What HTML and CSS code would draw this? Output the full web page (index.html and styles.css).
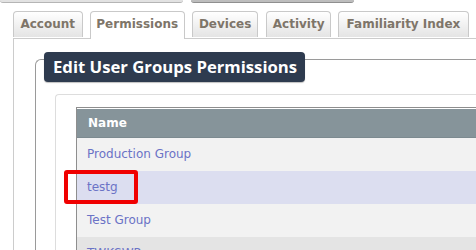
FILE: index.html
```html
<!DOCTYPE html>
<html>
<head>
<meta charset="utf-8">
<link rel="stylesheet" href="styles.css">
</head>
<body>
<div class="topbar"><div class="tb tb1"></div><div class="tb tb2"></div></div>
<div class="tabs">
  <div class="tab w-account">Account</div>
  <div class="tab active w-perm">Permissions</div>
  <div class="tab w-dev">Devices</div>
  <div class="tab w-act">Activity</div>
  <div class="tab w-fam">Familiarity Index</div>
</div>
<div class="panel">
  <div class="group">
    <div class="legend">Edit User Groups Permissions</div>
    <div class="inner">
      <div class="table">
        <div class="th">Name</div>
        <div class="tr r1"><a>Production Group</a></div>
        <div class="tr r2"><a>testg</a></div>
        <div class="tr r1"><a>Test Group</a></div>
        <div class="tr r3"><a>TWKSWP</a></div>
      </div>
    </div>
  </div>
</div>
<div class="highlight"></div>
</body>
</html>
```
FILE: styles.css
```css
html, body {
  margin: 0;
  padding: 0;
  background: #fff;
  width: 476px;
  height: 250px;
  overflow: hidden;
  position: relative;
}
body {
  font-family: "DejaVu Sans", Verdana, sans-serif;
}
.topbar {
  display: flex;
  height: 3px;
  gap: 8px;
}
.tb {
  height: 2px;
  border-radius: 0 0 4px 4px;
}
.tb1 {
  width: 183px;
  background: #e2e2e2;
  border-bottom: 1px solid #b5b5b5;
}
.tb2 {
  width: 163px;
  background: #bdbdbd;
  border-bottom: 1px solid #8f8f8f;
}
.tabs {
  display: flex;
  padding-left: 13px;
  margin-top: 8px;
  height: 27px;
  align-items: flex-start;
}
.tab {
  height: 26px;
  box-sizing: border-box;
  margin-right: 7px;
  border: 1px solid #c9c9c9;
  border-bottom: none;
  border-radius: 4px 4px 0 0;
  background: linear-gradient(#ffffff, #e4e4e4);
  font-weight: bold;
  font-size: 12px;
  line-height: 25px;
  color: #7e7569;
  white-space: nowrap;
  text-align: center;
}
.w-account { width: 70px; }
.w-perm { width: 96px; }
.w-dev { width: 67px; margin-right: 8px; }
.w-act { width: 65px; }
.w-fam { width: 132px; }
.tab.active {
  height: 28px;
  background: #fff;
  position: relative;
  z-index: 1;
}
.panel {
  margin-left: 13px;
  border-left: 1px solid #cccccc;
  border-top: 1px solid #cccccc;
  padding-left: 21px;
  padding-top: 20px;
  height: 400px;
}
.group {
  border-left: 1px solid #9a9a9a;
  border-top: 1px solid #9a9a9a;
  border-radius: 6px 0 0 0;
  padding-left: 19px;
}
.legend {
  display: block;
  width: max-content;
  margin-top: -8px;
  margin-left: -11px;
  height: 30px;
  box-sizing: border-box;
  padding: 0 8px 0 9px;
  background: #2e3b4f;
  border-radius: 4px;
  color: #fff;
  font-family: "Open Sans", sans-serif;
  font-weight: bold;
  font-size: 16.7px;
  line-height: 29px;
  box-shadow: 0 1px 1px rgba(0,0,0,0.25);
}
.inner {
  margin-top: 12px;
  border-left: 1px solid #dddddd;
  border-top: 1px solid #dddddd;
  border-radius: 4px 0 0 0;
  padding-left: 20px;
  padding-top: 12px;
}
.table {
  border: 1px solid #8e8e8e;
  border-right: none;
  font-size: 12px;
}
.th {
  height: 28px;
  line-height: 28px;
  background: #86949a;
  border-top: 1px solid #fff;
  color: #fff;
  font-weight: bold;
  padding-left: 11px;
  border-bottom: 1px solid #7c8a90;
}
.tr {
  height: 33px;
  line-height: 33px;
  padding-left: 10px;
}
.tr a {
  color: #6b73c6;
}
.r1 { background: #f2f2f2; }
.r2 { background: #dcdef0; }
.r3 { background: #e4e4e4; }
.highlight {
  position: absolute;
  left: 64px;
  top: 170px;
  width: 74px;
  height: 34px;
  box-sizing: border-box;
  border: 4px solid #f00000;
  border-radius: 3px;
}
```
